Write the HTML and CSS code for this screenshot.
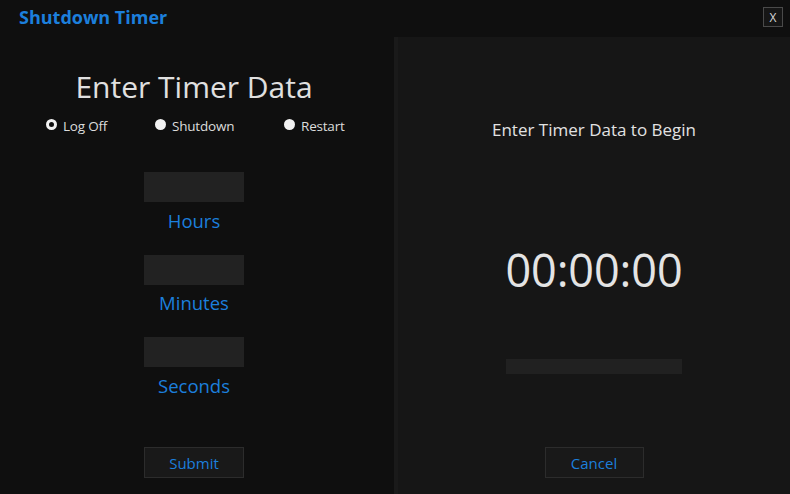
FILE: index.html
```html
<!DOCTYPE html>
<html>
<head>
<meta charset="utf-8">
<link rel="stylesheet" href="styles.css">
</head>
<body>
<div class="app">
  <header class="titlebar">
    <div class="title">Shutdown Timer</div>
    <button class="close">X</button>
  </header>
  <main class="content">
    <section class="left">
      <h1 class="heading">Enter Timer Data</h1>
      <div class="radios">
        <label class="radio"><span class="dot checked"></span>Log Off</label>
        <label class="radio"><span class="dot"></span>Shutdown</label>
        <label class="radio"><span class="dot"></span>Restart</label>
      </div>
      <div class="field f1"><div class="input"></div><div class="flabel">Hours</div></div>
      <div class="field f2"><div class="input"></div><div class="flabel">Minutes</div></div>
      <div class="field f3"><div class="input"></div><div class="flabel">Seconds</div></div>
      <button class="btn submit">Submit</button>
    </section>
    <section class="right">
      <div class="status">Enter Timer Data to Begin</div>
      <div class="clock">00:00:00</div>
      <div class="progress"></div>
      <button class="btn cancel">Cancel</button>
    </section>
  </main>
</div>
</body>
</html>
```
FILE: styles.css
```css
* { box-sizing: border-box; }
html, body { margin: 0; padding: 0; }
body {
  width: 790px;
  height: 494px;
  background: #0f0f0f;
  font-family: "Open Sans", "Noto Sans", sans-serif;
  color: #e2e2e2;
  overflow: hidden;
}
.app { display: flex; flex-direction: column; height: 494px; }
.titlebar {
  height: 37px;
  display: flex;
  align-items: flex-start;
  justify-content: space-between;
  padding: 0 7px 0 19px;
}
.title {
  color: #1c7fdc;
  font-weight: 700;
  font-size: 18px;
  line-height: 22px;
  margin-top: 6px;
  letter-spacing: 0;
}
.close {
  margin-top: 7px;
  width: 20px;
  height: 20px;
  padding: 0;
  background: #161616;
  border: 1px solid #4a4a4a;
  color: #d8d8d8;
  font-family: "Open Sans", sans-serif;
  font-size: 12px;
  line-height: 17px;
}
.content { flex: 1; display: flex; }
.left {
  width: 388px;
  display: flex;
  flex-direction: column;
  align-items: center;
}
.heading {
  margin: 30px 0 0;
  font-weight: 400;
  font-size: 30px;
  line-height: 40px;
  color: #e0e0e0;
  letter-spacing: 0;
}
.radios {
  align-self: stretch;
  display: grid;
  grid-template-columns: 109px 129px auto;
  padding-left: 46px;
  margin-top: 7px;
  height: 24px;
  align-items: center;
  font-size: 13.5px;
  color: #dcdcdc;
}
.radio { display: flex; align-items: center; letter-spacing: -0.2px; }
.dot {
  width: 11px;
  height: 11px;
  border-radius: 50%;
  background: #f2f2f2;
  margin-right: 6px;
  margin-top: -3px;
}
.dot.checked {
  background: #101010;
  border: 3px solid #f2f2f2;
}
.field {
  display: flex;
  flex-direction: column;
  align-items: center;
}
.f1 { margin-top: 34px; }
.input {
  width: 100px;
  height: 30px;
  background: #222222;
}
.flabel {
  color: #1c7fdc;
  font-size: 18.5px;
  line-height: 26px;
  margin-top: 6px;
  margin-bottom: 21px;
}
.f2 .flabel { margin-top: 5px; }
.f3 .flabel { margin-bottom: 0; }
.btn {
  width: 100px;
  height: 31px;
  background: #191919;
  border: 1px solid #2c2c2c;
  color: #1c7fdc;
  font-family: "Open Sans", sans-serif;
  font-size: 15px;
  padding: 0;
  line-height: 28px;
}
.submit { margin-top: 48px; }
.right {
  flex: 1;
  margin-left: 6px;
  background: #161616;
  border-left: 4px solid #1a1a1a;
  display: flex;
  flex-direction: column;
  align-items: center;
}
.status {
  margin-top: 81px;
  font-size: 17px;
  line-height: 24px;
  color: #e2e2e2;
  letter-spacing: 0;
}
.clock {
  margin-top: 100px;
  font-size: 45px;
  line-height: 56px;
  color: #e4e4e4;
  letter-spacing: -0.1px;
}
.progress {
  margin-top: 61px;
  width: 176px;
  height: 15px;
  background: #212121;
}
.cancel { margin-top: 73px; width: 99px; }
```
